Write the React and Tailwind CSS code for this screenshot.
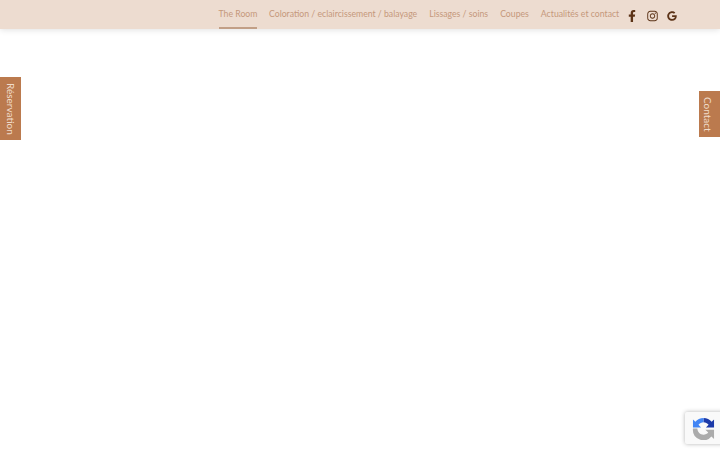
import { FaFacebookF, FaInstagram, FaGoogle } from 'react-icons/fa'

const links = ['Coloration / eclaircissement / balayage', 'Lissages / soins', 'Coupes', 'Actualités et contact']

function Recaptcha() {
  return (
    <svg width="23" height="23" viewBox="0 0 24 24">
      <path d="M12 1c3.5 0 6.5 1.6 8.5 4L23 2.5V11h-8.5l2.8-2.8C16 6.5 14.2 5.5 12 5.5z" fill="#1c3aa9" />
      <path d="M12 1v4.5c-2 0-4 1-5.2 2.7L9.5 11H1V2.5L3.5 5C5.5 2.6 8.5 1 12 1z" fill="#4285f4" />
      <path d="M1 12h4.6c.1 3.6 3 6.5 6.4 6.5 2 0 3.7-.9 4.9-2.3L14 13.3h9V23l-2.7-2.7A11 11 0 0 1 1 12z" fill="#ababab" />
    </svg>
  )
}

export default function App() {
  return (
    <div className="relative h-[450px] w-[720px] overflow-hidden bg-white font-['Lato','Noto_Sans',sans-serif]">
      <header className="flex h-[29px] items-start bg-[#eddcd0] pl-[219px] shadow-[0_1px_6px_rgba(0,0,0,0.12)]">
        <a className="flex h-[29px] w-[38px] items-center justify-center whitespace-nowrap border-b-2 border-[#c29f86] text-[8.7px] text-[#c5987b]">The Room</a>
        <nav className="ml-3 flex h-[28px] items-center gap-3 whitespace-nowrap text-[8.7px] text-[#c5987b]">
          {links.map((l) => (
            <a key={l}>{l}</a>
          ))}
        </nav>
        <div className="ml-[9px] flex h-[31px] items-center text-[#5c3317]">
          <FaFacebookF className="h-[12px] w-[8px]" />
          <FaInstagram className="ml-[11px] h-[12px] w-[11px]" />
          <FaGoogle className="ml-[9px] h-[10px] w-[10px]" />
        </div>
      </header>

      <a className="absolute left-0 top-[77px] flex h-[63px] w-[21px] items-center justify-center bg-[#bb7a4e] text-[10px] text-[#f0dccb] [writing-mode:vertical-rl]">Réservation</a>
      <a className="absolute right-0 top-[91px] flex h-[46px] w-[21px] items-center justify-center bg-[#bb7a4e] pr-1 text-[10px] text-[#f0dccb] [writing-mode:vertical-rl]">Contact</a>

      <div className="absolute left-[685px] top-[412px] flex h-[32px] w-[40px] items-center rounded-[2px] bg-[#f9f9f9] pl-[7px] shadow-[0_0_4px_rgba(0,0,0,0.3)]">
        <Recaptcha />
      </div>
    </div>
  )
}
